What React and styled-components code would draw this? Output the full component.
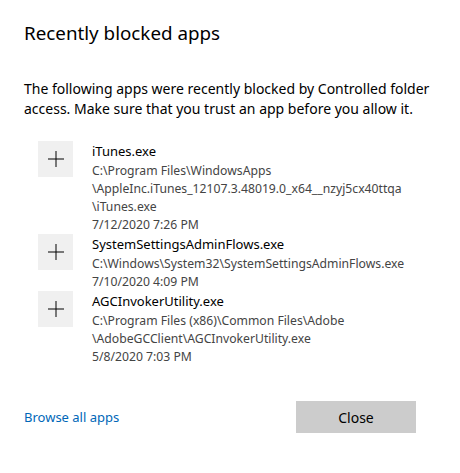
import styled, { createGlobalStyle } from 'styled-components';

const GlobalStyle = createGlobalStyle`
  body {
    margin: 0;
    background: #ffffff;
    font-family: "Noto Sans", "Open Sans", sans-serif;
    color: #000000;
  }
`;

const Dialog = styled.div`
  width: 460px;
  height: 473px;
  box-sizing: border-box;
  padding: 19px 24px 0 24px;
  display: flex;
  flex-direction: column;
`;

const Title = styled.h1`
  margin: 0;
  font-size: 18.8px;
  font-weight: 400;
  line-height: 28px;
`;

const Intro = styled.p`
  margin: 32px 0 0 0;
  font-size: 14px;
  line-height: 20px;
`;

const AppList = styled.ul`
  list-style: none;
  margin: 22px 0 0 14px;
  padding: 0;
`;

const AppRow = styled.li`
  display: flex;
  gap: 19px;
`;

const AddButton = styled.div`
  width: 35px;
  height: 36px;
  flex: none;
  background: #f0f0f0;
  display: flex;
  align-items: center;
  justify-content: center;
`;

const Info = styled.div`
  display: flex;
  flex-direction: column;
`;

const AppName = styled.span`
  font-size: 13px;
  line-height: 21px;
`;

const Detail = styled.span`
  font-size: 12.2px;
  line-height: 18px;
  color: #444444;
`;

const Footer = styled.div`
  margin-top: auto;
  margin-bottom: 40px;
  display: flex;
  align-items: center;
  justify-content: space-between;
  padding-right: 20px;
`;

const Link = styled.a`
  font-size: 13px;
  color: #0067b8;
  text-decoration: none;
`;

const CloseButton = styled.button`
  width: 120px;
  height: 32px;
  border: none;
  background: #cccccc;
  font-family: inherit;
  font-size: 14px;
  color: #000000;
`;

const Plus = () => (
  <svg width="16" height="16" viewBox="0 0 16 16">
    <path d="M8 0v16M0 8h16" stroke="#000" strokeWidth="1" fill="none" />
  </svg>
);

const apps = [
  {
    name: 'iTunes.exe',
    path: ['C:\\Program Files\\WindowsApps', '\\AppleInc.iTunes_12107.3.48019.0_x64__nzyj5cx40ttqa', '\\iTunes.exe'],
    date: '7/12/2020 7:26 PM',
  },
  {
    name: 'SystemSettingsAdminFlows.exe',
    path: ['C:\\Windows\\System32\\SystemSettingsAdminFlows.exe'],
    date: '7/10/2020 4:09 PM',
  },
  {
    name: 'AGCInvokerUtility.exe',
    path: ['C:\\Program Files (x86)\\Common Files\\Adobe', '\\AdobeGCClient\\AGCInvokerUtility.exe'],
    date: '5/8/2020 7:03 PM',
  },
];

export default function App() {
  return (
    <>
      <GlobalStyle />
      <Dialog>
        <Title>Recently blocked apps</Title>
        <Intro>
          The following apps were recently blocked by Controlled folder access. Make sure that you trust an app before you allow it.
        </Intro>
        <AppList>
          {apps.map(app => (
            <AppRow key={app.name}>
              <AddButton><Plus /></AddButton>
              <Info>
                <AppName>{app.name}</AppName>
                {app.path.map(line => (
                  <Detail key={line}>{line}</Detail>
                ))}
                <Detail>{app.date}</Detail>
              </Info>
            </AppRow>
          ))}
        </AppList>
        <Footer>
          <Link href="#">Browse all apps</Link>
          <CloseButton>Close</CloseButton>
        </Footer>
      </Dialog>
    </>
  );
}
